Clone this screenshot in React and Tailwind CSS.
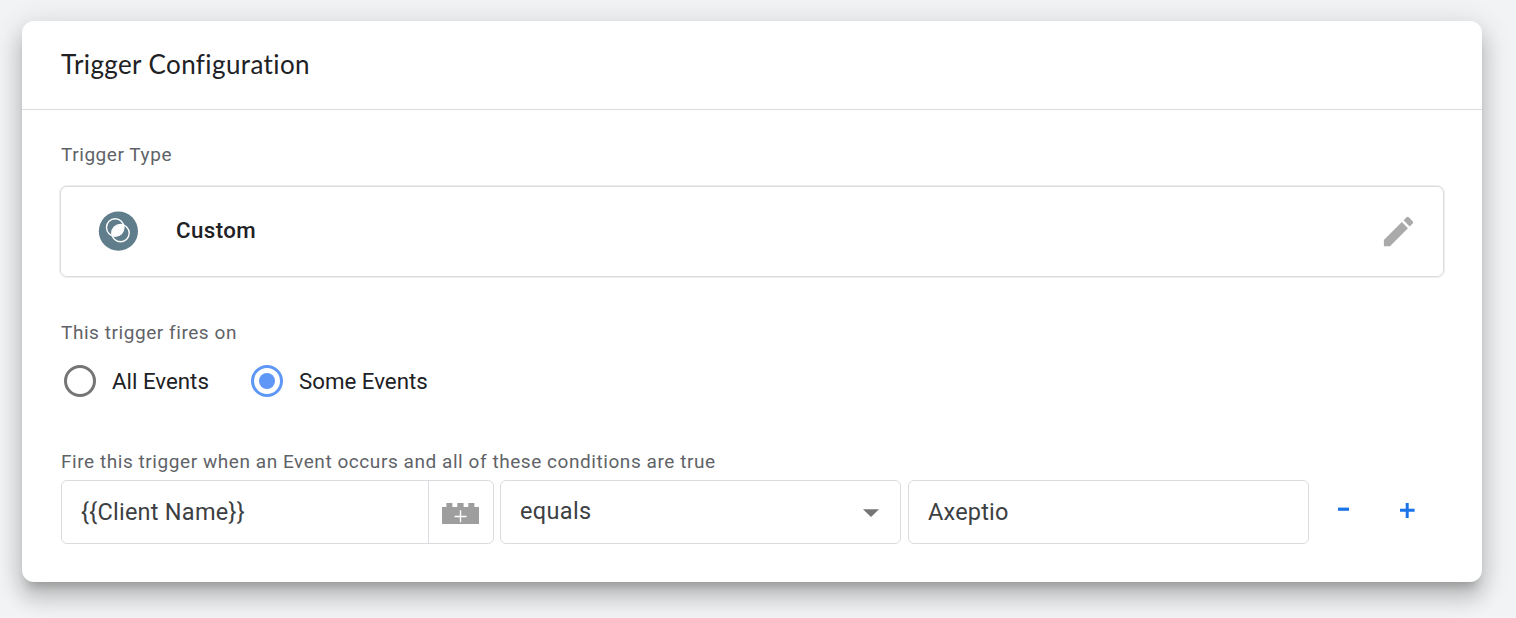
const label = "text-[19px] leading-6 tracking-[0.56px] text-[#5f6368] whitespace-nowrap";

function CustomEventIcon() {
  return (
    <svg className="-mt-px -ml-px size-10 shrink-0" viewBox="0 0 40 40" fill="none">
      <circle cx="20.4" cy="20.2" r="19.6" fill="#607d8b" />
      <clipPath id="lens">
        <circle cx="17.2" cy="16.5" r="8.7" />
      </clipPath>
      <circle cx="22.5" cy="22.1" r="8.7" fill="#fff" clipPath="url(#lens)" />
      <circle cx="17.2" cy="16.5" r="8.7" stroke="#fff" strokeWidth="1.4" />
      <circle cx="22.5" cy="22.1" r="8.7" stroke="#fff" strokeWidth="1.4" />
    </svg>
  );
}

function BrickIcon() {
  return (
    <svg className="mr-[2px] h-6 w-[37px]" viewBox="0 0 37 24">
      <path d="M0 7H4.4V3H10.4V7H15.3V3H21.6V7H26.3V3H32.4V7H37V24H0Z" fill="#9e9e9e" />
      <path d="M18.5 10.3V22.3M12.5 16.5H24.5" stroke="#fff" strokeWidth="1.4" />
    </svg>
  );
}

function Radio({ checked, children }) {
  return (
    <label className="flex items-center gap-4 text-[22.3px] leading-8 text-[#202124] whitespace-nowrap">
      <span
        className={
          checked
            ? "flex size-8 items-center justify-center rounded-full border-3 border-[#5e97f6]"
            : "flex size-8 items-center justify-center rounded-full border-3 border-[#757575]"
        }
      >
        {checked && <span className="size-4 rounded-full bg-[#5e97f6]" />}
      </span>
      {children}
    </label>
  );
}

export default function App() {
  return (
    <div className="h-[618px] w-[1516px] overflow-hidden bg-[#f1f3f4] pt-[21px] pl-[22px] font-['Roboto',sans-serif]">
      <section className="h-[561px] w-[1460px] rounded-xl bg-white shadow-[0_10px_10px_-6px_rgba(0,0,0,0.2),0_16px_20px_2px_rgba(0,0,0,0.14),0_6px_28px_4px_rgba(0,0,0,0.12)]">
        <header className="flex h-[89px] items-center border-b border-[#dadce0] pb-[2px] pl-[39px]">
          <h1 className="font-['Lato',sans-serif] text-[26px] leading-8 tracking-[0.4px] text-[#202124]">
            Trigger Configuration
          </h1>
        </header>
        <div className="px-[38px] pt-[33px]">
          <div className={`${label} pl-px`}>Trigger Type</div>
          <div className="mt-[19px] flex h-[91px] w-[1384px] items-center rounded-[7px] border border-[#dadce0] pr-[25px] pl-[38px] shadow-[0_0_0_1px_rgba(218,220,224,0.5)]">
            <CustomEventIcon />
            <span className="-mt-1 ml-[38px] text-[22.3px] leading-8 font-medium tracking-[0.4px] text-[#202124]">
              Custom
            </span>
            <svg className="-mt-px ml-auto size-[39px]" viewBox="0 0 24 24" fill="#aaa">
              <path d="M3 17.25V21h3.75L17.81 9.94l-3.75-3.75L3 17.25zM20.71 7.04a1 1 0 0 0 0-1.41l-2.34-2.34a1 1 0 0 0-1.41 0l-1.83 1.83 3.75 3.75 1.83-1.83z" />
            </svg>
          </div>
          <div className={`${label} mt-11 pl-px`}>This trigger fires on</div>
          <div className="mt-5 flex gap-[42px] pl-1">
            <Radio>All Events</Radio>
            <Radio checked>Some Events</Radio>
          </div>
          <div className={`${label} mt-[53px] pl-px`}>
            Fire this trigger when an Event occurs and all of these conditions are true
          </div>
          <div className="mt-[6px] ml-px flex h-16 text-[23.5px] leading-8 tracking-[0.2px] text-[#3c4043]">
            <div className="flex w-[433px] rounded-md border border-[#dadce0]">
              <div className="flex flex-1 items-center pl-[19px] tracking-[0.25px]">{"{{Client Name}}"}</div>
              <div className="flex w-[65px] items-center justify-center border-l border-[#dadce0]">
                <BrickIcon />
              </div>
            </div>
            <div className="ml-[6px] flex w-[401px] items-center rounded-md border border-[#dadce0] pr-[21px] pl-[19px]">
              <span className="-mt-[2px] tracking-[0.35px]">equals</span>
              <svg className="mt-px ml-auto h-2 w-4" viewBox="0 0 16 8">
                <path d="M0 0.3H16L8 8Z" fill="#757575" />
              </svg>
            </div>
            <div className="ml-[7px] flex w-[401px] items-center rounded-md border border-[#dadce0] pl-[19px]">
              Axeptio
            </div>
            <svg className="ml-[29px] h-16 w-[11px]" viewBox="0 0 11 64">
              <path d="M0 29.2H11" stroke="#1a73e8" strokeWidth="3.2" />
            </svg>
            <svg className="ml-[51px] h-16 w-[15px]" viewBox="0 0 15 64">
              <path d="M0 30.3H14.6M7.2 23V38" stroke="#1a73e8" strokeWidth="3" />
            </svg>
          </div>
        </div>
      </section>
    </div>
  );
}
